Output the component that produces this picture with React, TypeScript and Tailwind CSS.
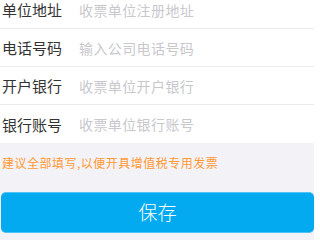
import React from "react";

const rows = [
  { label: "单位地址", ph: "收票单位注册地址" },
  { label: "电话号码", ph: "输入公司电话号码" },
  { label: "开户银行", ph: "收票单位开户银行" },
  { label: "银行账号", ph: "收票单位银行账号" },
];

export default function App() {
  return (
    <div
      className="w-[320px] h-[240px] overflow-hidden bg-white flex"
      style={{ fontFamily: '"Noto Sans CJK SC", "Noto Sans", sans-serif' }}
    >
      <div className="w-[314px] h-[240px] bg-[#f3f2f7] flex flex-col">
        <div className="bg-white -mt-[9px] flex flex-col">
          {rows.map((r, i) => (
            <div
              key={r.label}
              className={`h-[38px] flex items-center ${i < rows.length - 1 ? "border-b border-[#ebebeb]" : ""}`}
            >
              <span className="ml-[2px] w-[77px] text-[15px] text-[#333333] leading-none">{r.label}</span>
              <span className="text-[14px] text-[#c8c8cc] leading-none tracking-[0.4px]">{r.ph}</span>
            </div>
          ))}
        </div>
        <div className="h-[49px] flex items-center pl-[2px] pb-[10px]">
          <span className="text-[12px] text-[#ff9933] leading-none tracking-[0.5px]">建议全部填写,以便开具增值税专用发票</span>
        </div>
        <button className="ml-[1px] w-[313px] h-[41px] rounded-[5px] bg-[#03aaf0] border-y border-[#4fc3f7] text-white text-[19px] font-light flex items-center justify-center">
          保存
        </button>
      </div>
    </div>
  );
}
